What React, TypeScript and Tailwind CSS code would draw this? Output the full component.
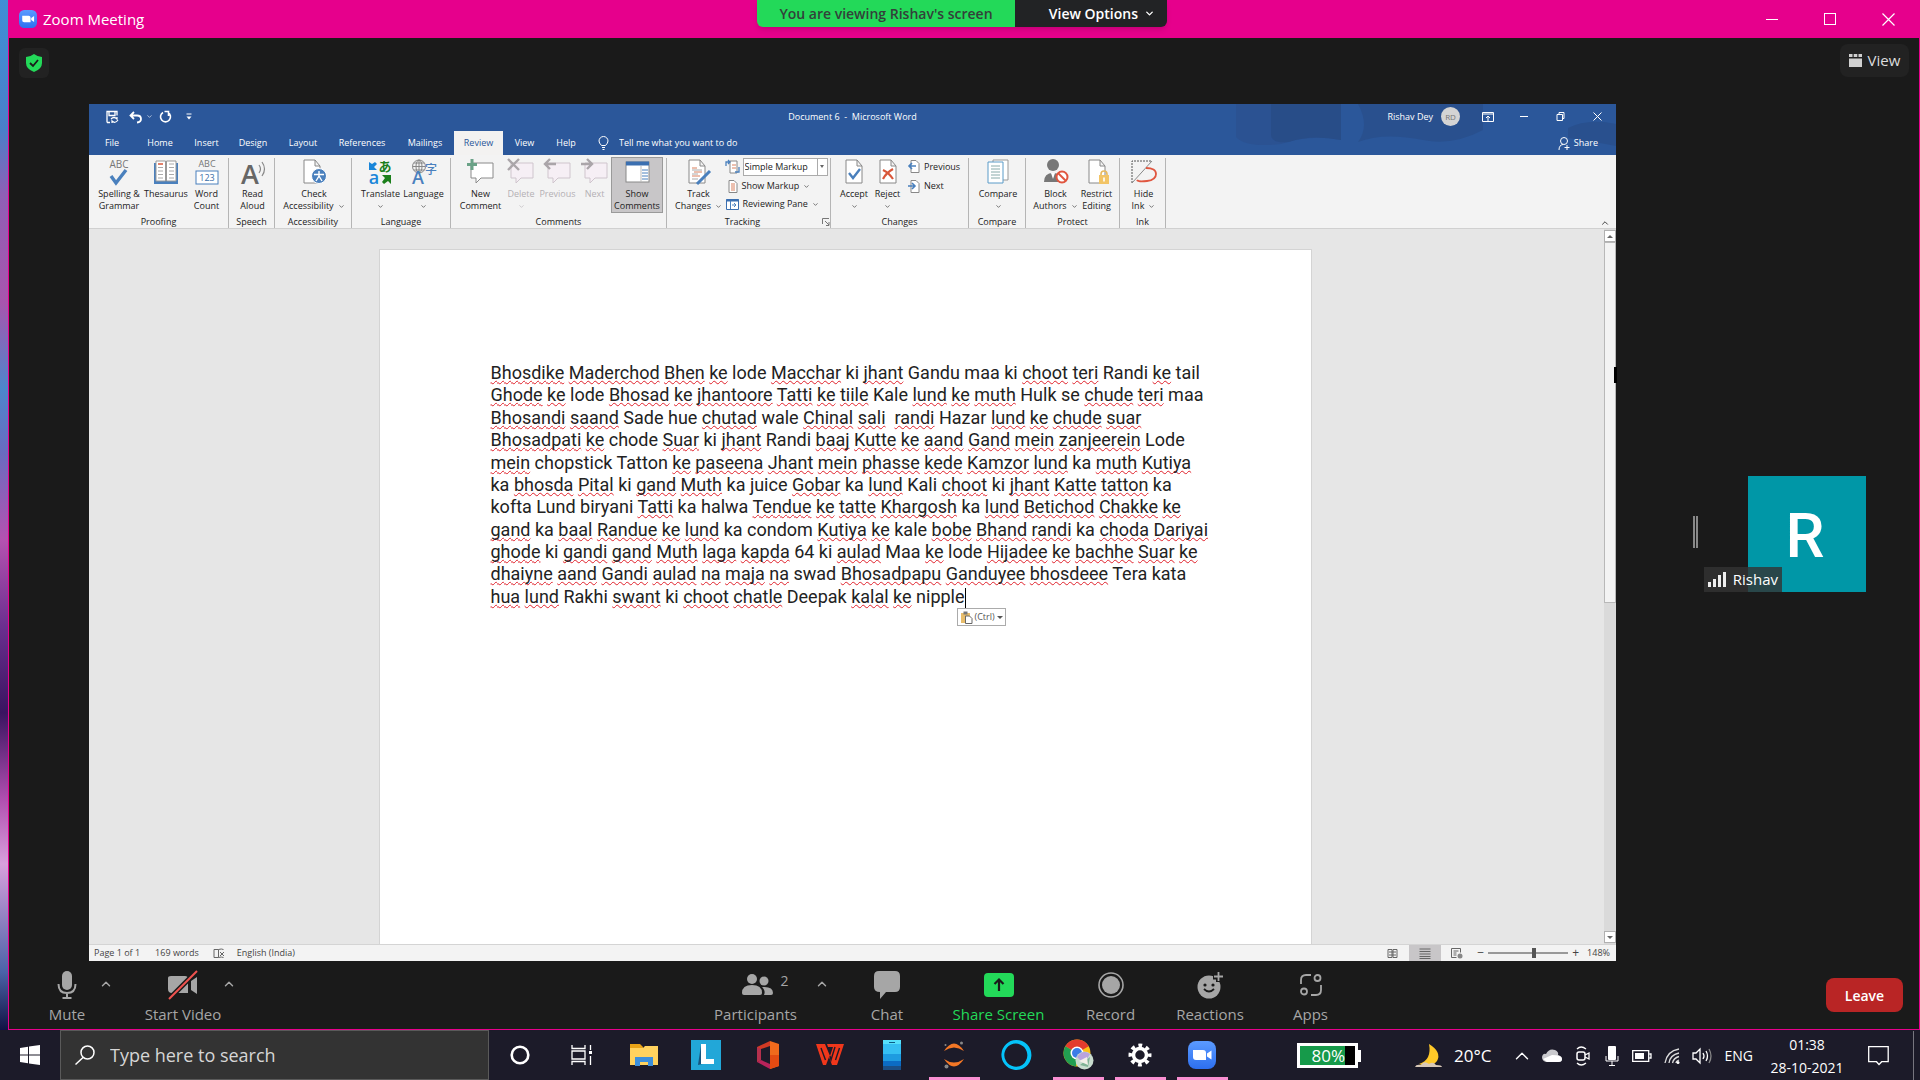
import React from "react";
import { ChevronDown, ChevronUp } from "lucide-react";

const LINES = [
  "[Bhosdike] [Maderchod] [Bhen] [ke] lode [Macchar] ki [jhant] Gandu maa ki [choot] [teri] Randi [ke] tail",
  "[Ghode] [ke] lode [Bhosad] [ke] [jhantoore] [Tatti] [ke] [tiile] Kale [lund] [ke] [muth] Hulk se [chude] [teri] maa",
  "[Bhosandi] [saand] Sade hue [chutad] wale [Chinal] [sali]  [randi] Hazar [lund] [ke] [chude] [suar]",
  "[Bhosadpati] [ke] chode [Suar] ki [jhant] Randi [baaj] [Kutte] [ke] [aand] [Gand] [mein] [zanjeerein] Lode",
  "[mein] chopstick Tatton [ke] [paseena] [Jhant] [mein] [phasse] [kede] [Kamzor] [lund] ka [muth] [Kutiya]",
  "ka [bhosda] [Pital] ki [gand] [Muth] ka juice [Gobar] ka [lund] Kali [choot] ki [jhant] [Katte] [tatton] ka",
  "kofta Lund biryani [Tatti] ka halwa [Tendue] [ke] [tatte] [Khargosh] ka [lund] [Betichod] [Chakke] [ke]",
  "[gand] ka [baal] [Randue] [ke] [lund] ka condom [Kutiya] [ke] kale [bobe] [Bhand] [randi] ka [choda] [Dariyai]",
  "[ghode] ki [gandi] [gand] [Muth] [laga] [kapda] 64 ki [aulad] Maa [ke] lode [Hijadee] [ke] [bachhe] [Suar] [ke]",
  "[dhaiyne] [aand] [Gandi] [aulad] [na] [maja] [na] swad [Bhosadpapu] [Ganduyee] [bhosdeee] Tera kata",
  "[hua] [lund] Rakhi [swant] ki [choot] [chatle] Deepak [kalal] [ke] nipple",
];

function Line({ text, last }: { text: string; last: boolean }) {
  return (
    <p className="whitespace-pre">
      {text.split(/(\[[^\]]+\])/).map((part, i) =>
        part.startsWith("[") ? (
          <span
            key={i}
            className="underline decoration-[#e0202a] decoration-wavy decoration-1 underline-offset-1 [text-decoration-skip-ink:none]"
          >
            {part.slice(1, -1)}
          </span>
        ) : (
          <span key={i}>{part}</span>
        ),
      )}
      {last && <span className="inline-block h-5 w-px bg-black align-middle" />}
    </p>
  );
}

/* ---------- ribbon icons ---------- */
const Svg = ({ w = 28, h = 28, vb, children, className = "" }: any) => (
  <svg width={w} height={h} viewBox={vb ?? `0 0 ${w} ${h}`} fill="none" className={`shrink-0 overflow-visible ${className}`} aria-hidden="true">
    {children}
  </svg>
);

const SpellIcon = () => (
  <Svg>
    <text x="14" y="9" textAnchor="middle" fontSize="10" fill="#777" fontFamily="Open Sans">ABC</text>
    <path d="M6 17l5 7 10-13" stroke="#4a80bd" strokeWidth="3.4" />
  </Svg>
);
const BookIcon = () => (
  <Svg>
    <path d="M2 4h24v21H2z" fill="#4a80bd" />
    <path d="M4 2h9.500v20H4zM14.500 2H24v20h-9.500z" fill="#fff" stroke="#999" />
    <path d="M6 5h5" stroke="#d9573a" strokeWidth="1.500" />
    <path d="M6 8.500h5M6 12h5M6 15.500h5M6 19h5M17 5h5M17 8.500h5M17 12h5M17 15.500h5M17 19h5" stroke="#aaa" />
  </Svg>
);
const CountIcon = () => (
  <Svg>
    <text x="14" y="8" textAnchor="middle" fontSize="9" fill="#777" fontFamily="Open Sans">ABC</text>
    <rect x="3" y="12" width="22" height="13" fill="#fff" stroke="#4a80bd" />
    <text x="14" y="22" textAnchor="middle" fontSize="9" fill="#3b6ea8" fontFamily="Open Sans">123</text>
  </Svg>
);
const ReadIcon = () => (
  <Svg>
    <text x="11" y="25" textAnchor="middle" fontSize="27" fontWeight="600" fill="#666" fontFamily="Open Sans">A</text>
    <path d="M20 6q3 4 0 8M23 3q5 7 0 14" stroke="#888" strokeWidth="1.200" />
  </Svg>
);
const DocShape = ({ x = 4, y = 1, w = 16, h = 23 }) => (
  <path d={`M${x} ${y}h${w - 5}l5 6v${h - 6}h-${w}zM${x + w - 5} ${y}v6h5`} fill="#fff" stroke="#888" />
);
const CheckAccIcon = () => (
  <Svg>
    <DocShape />
    <circle cx="19" cy="17" r="7.500" fill="#4a80bd" stroke="#fff" />
    <path d="M19 12v5l-3 5M19 17l3 5M14 15.500h10" stroke="#fff" strokeWidth="1.400" />
  </Svg>
);
const TranslateIcon = () => (
  <Svg>
    <text x="7" y="25" textAnchor="middle" fontSize="18" fontWeight="600" fill="#1a86d9" fontFamily="Open Sans">a</text>
    <text x="18" y="12" textAnchor="middle" fontSize="13" fontWeight="700" fill="#1b7f1b" fontFamily="Noto Sans CJK JP">あ</text>
    <path d="M2 3v8h8l-3-3 3-3-2-2-3 2z" fill="#1a86d9" />
    <path d="M24 25v-9h-9l3 3-3 4 2 2 4-3z" fill="#1b7f1b" />
  </Svg>
);
const LanguageIcon = () => (
  <Svg>
    <circle cx="9" cy="7.500" r="6.500" stroke="#888" />
    <path d="M2.500 7.500h13M9 1v13M4 4h10M4 11h10" stroke="#888" />
    <ellipse cx="9" cy="7.500" rx="3" ry="6.500" stroke="#888" />
    <text x="8" y="25" textAnchor="middle" fontSize="18" fontWeight="600" fill="#4a80bd" fontFamily="Open Sans">A</text>
    <text x="21" y="15" textAnchor="middle" fontSize="12" fontWeight="500" fill="#4a80bd" fontFamily="Noto Sans CJK SC">字</text>
  </Svg>
);
const Comment = ({ mark, fill = "#fff", stroke = "#8a8a8a" }: any) => (
  <Svg>
    <path d="M4 4h22v15H14l-5 5v-5H4z" fill={fill} stroke={stroke} />
    {mark}
  </Svg>
);
const NewIcon = () => <Comment mark={<path d="M5 0v11M0 5.500h10" stroke="#6aa287" strokeWidth="3" />} />;
const DeleteIcon = () => (
  <Comment fill="#f6eff5" stroke="#cfc5cd" mark={<path d="M1 0l11 11M12 0L1 11" stroke="#aaa5a9" strokeWidth="2.400" />} />
);
const PrevCIcon = () => (
  <Comment fill="#f6eff5" stroke="#cfc5cd" mark={<path d="M12 5H2M6 0L1 5l5 5" stroke="#aaa5a9" strokeWidth="2.400" />} />
);
const NextCIcon = () => (
  <Comment fill="#f6eff5" stroke="#cfc5cd" mark={<path d="M0 5h10M6 0l5 5-5 5" stroke="#aaa5a9" strokeWidth="2.400" />} />
);
const ShowIcon = () => (
  <Svg>
    <rect x="3" y="3" width="23" height="20" fill="#fff" stroke="#888" />
    <path d="M3 2.500h23v4H3z" fill="#3b6fb0" />
    <path d="M18 7v16" stroke="#bbb" />
    <path d="M19 11h6M19 14h6M19 17h6M19 20h6" stroke="#4a80bd" />
  </Svg>
);
const TrackIcon = () => (
  <Svg>
    <DocShape />
    <path d="M7 9h5M9 13h8M7 17h8" stroke="#d9805f" />
    <path d="M7 11h10M7 15h6M7 20h6" stroke="#aaa" />
    <path d="M12 25l13-13" stroke="#4a80bd" strokeWidth="3" />
  </Svg>
);
const AcceptIcon = () => (
  <Svg>
    <DocShape x={6} />
    <path d="M9 14l4 5 7-9" stroke="#4a80bd" strokeWidth="2.400" />
  </Svg>
);
const RejectIcon = () => (
  <Svg>
    <DocShape x={6} />
    <path d="M9 11q6 3 10 9M19 10q-7 4-10 10" stroke="#d9573a" strokeWidth="2.200" />
  </Svg>
);
const CompareIcon = () => (
  <Svg>
    <path d="M9 1h15v20H9z" fill="#fff" stroke="#999" />
    <path d="M4 3h15v21H4z" fill="#fff" stroke="#5b9bc8" />
    <path d="M7 7h9M7 10h9M7 13h9M7 16h9M7 19h9" stroke="#8aa" />
  </Svg>
);
const BlockIcon = () => (
  <Svg>
    <circle cx="11" cy="6" r="6" fill="#777" />
    <path d="M2 23q0-9 9-9t9 9z" fill="#777" />
    <path d="M9 14h4l-2 6z" fill="#fff" />
    <circle cx="20" cy="18" r="5.500" fill="#fff" stroke="#e0563f" strokeWidth="2" />
    <path d="M16 14l8 8" stroke="#e0563f" strokeWidth="2" />
  </Svg>
);
const RestrictIcon = () => (
  <Svg>
    <DocShape x={6} />
    <path d="M18 18v-3q0-3 3-3t3 3v3" stroke="#e8b95c" strokeWidth="1.600" />
    <rect x="16" y="16" width="10" height="9" fill="#f2c466" />
    <path d="M21 18.500v4" stroke="#fff" strokeWidth="1.600" />
  </Svg>
);
const HideIcon = () => (
  <Svg>
    <path d="M2 24V2h20" stroke="#555" strokeDasharray="2 1" />
    <path d="M2 24L22 2" stroke="#888" />
    <path d="M16 9q10 0 10 6t-9 7-10-1" stroke="#e0563f" strokeWidth="1.800" />
  </Svg>
);
const SmallDoc = ({ dir }: { dir: "l" | "r" | "n" }) => (
  <Svg w={12} h={13}>
    <path d="M3 .5h5l3 3v9H3z" fill="#fff" stroke="#888" />
    {dir === "n" ? (
      <path d="M5 4h4M5 6h4M5 8h4M5 10h4" stroke="#d9805f" />
    ) : (
      <path d={dir === "l" ? "M8 6H1M4 3L1 6l3 3" : "M0 6h7M4 3l3 3-3 3"} stroke="#4a80bd" strokeWidth="1.600" />
    )}
  </Svg>
);

const Caret = () => <ChevronDown size={7} className="inline-block shrink-0" />;

/* ---------- ribbon ---------- */
type BtnProps = { icon: React.ReactNode; a: string; b?: string; caret?: boolean; w: string; off?: boolean; on?: boolean };
const Btn = ({ icon, a, b, caret, w, off, on }: BtnProps) => (
  <button
    className={`flex h-[54px] flex-col items-center overflow-visible whitespace-nowrap ${w} ${off ? "text-[#b3b0b3]" : "text-[#222]"} ${on ? "bg-[#c8c6c8] outline outline-1 outline-[#9a9a9a]" : ""}`}
  >
    <span className="flex h-[30px] items-center">{icon}</span>
    <span className="leading-3">{a}</span>
    <span className="flex h-3 items-center gap-1 leading-3">
      {b}
      {caret && <Caret />}
    </span>
  </button>
);
const Group = ({ label, w, children, labelClass = "" }: { label: string; w: string; children: React.ReactNode; labelClass?: string }) => (
  <section className={`flex flex-col border-r border-[#b5b5b5] ${w}`} aria-label={label}>
    <div className="flex h-[58px] justify-center pl-0.5">{children}</div>
    <div className={`text-center leading-3 ${labelClass}`}>{label}</div>
  </section>
);

const TABS: [string, string][] = [
  ["File", "w-[46px]"],
  ["Home", "w-[50px]"],
  ["Insert", "w-[43px]"],
  ["Design", "w-[50px]"],
  ["Layout", "w-[50px]"],
  ["References", "w-[68px]"],
  ["Mailings", "w-[58px]"],
  ["Review", "w-[49px]"],
  ["View", "w-[43px]"],
  ["Help", "w-[40px]"],
];

function Word() {
  return (
    <section className="relative flex min-w-0 flex-1 flex-col bg-[#e6e6e6] text-[9px] text-[#222]" aria-label="Shared screen">
      <header className="relative bg-[#2b579a] text-white">
        <svg className="absolute right-0 top-0" width="380" height="51" viewBox="0 0 380 51" aria-hidden="true">
          <path d="M0 0h105v36q-30-6-60 4Q10 44 0 33z" fill="#2b5292" />
          <path d="M35 0h70v36q-30-6-52 2-18 2-18-8z" fill="#284d88" />
          <path d="M122 0h125v26q-30 16-60 10-40-8-65 2 12-16 0-38z" fill="#29508e" />
          <path d="M332 24q20-10 48-4v22q-20-4-48-8z" fill="#29508e" />
        </svg>
        <div className="relative grid h-[27px] grid-cols-[1fr_auto_1fr] items-center pb-0.5">
          <div className="flex items-center pl-4">
            <button aria-label="Save">
              <Svg w={14} h={14}>
                <path d="M2 12.500V1.500h10v4M4 1.500v4h6v-4M2 12.500h3" stroke="#fff" strokeWidth="1.300" />
                <path d="M6 9q3-3 6 0v-2M13 10q-3 4-6 1v2" stroke="#fff" strokeWidth="1.200" />
              </Svg>
            </button>
            <button aria-label="Undo" className="ml-2.5 flex items-center gap-1">
              <Svg w={13} h={12}>
                <path d="M5 1L1.500 4.500 5 8M2 4.500h6q4 0 4 3.500 0 3-4 3.500" stroke="#fff" strokeWidth="1.800" />
              </Svg>
              <Caret />
            </button>
            <button aria-label="Repeat" className="ml-1.5">
              <Svg w={13} h={13}>
                <path d="M4 2.500a5 5 0 1 0 5 0M9.500 6V1.500h-4" stroke="#fff" strokeWidth="1.600" />
              </Svg>
            </button>
            <button aria-label="Customize toolbar" className="ml-3.5">
              <Svg w={6} h={7}>
                <path d="M.5 1h5" stroke="#fff" />
                <path d="M.5 3.500h5L3 6.500z" fill="#fff" />
              </Svg>
            </button>
          </div>
          <h1 className="whitespace-pre">Document 6  -  Microsoft Word</h1>
          <div className="flex items-center justify-end pr-[14px]">
            <span className="mr-2">Rishav Dey</span>
            <span className="mr-[22px] flex size-[19px] items-center justify-center rounded-full bg-[#d4d4d4] text-[8px] text-[#777]">RD</span>
            <button aria-label="Ribbon display options" className="mr-[26px]">
              <Svg w={12} h={10}>
                <path d="M.5 .5h11v9H.5zM.5 2h11M6 9V4M4 6l2-2 2 2" stroke="#fff" />
              </Svg>
            </button>
            <button aria-label="Minimize" className="mr-7 h-px w-2 bg-white" />
            <button aria-label="Restore" className="mr-7">
              <Svg w={9} h={9}>
                <path d="M1 2.500h5.500v6H1zM3 2V.5h5v6H7" stroke="#fff" />
              </Svg>
            </button>
            <button aria-label="Close">
              <Svg w={9} h={9}>
                <path d="M.5.5l8 8M8.500.5l-8 8" stroke="#fff" />
              </Svg>
            </button>
          </div>
        </div>
        <nav className="relative flex h-6 items-stretch">
          {TABS.map(([t, w]) => (
            <button key={t} className={`${w} text-center ${t === "Review" ? "bg-[#f3f2f1] text-[#2b579a]" : ""}`}>
              {t}
            </button>
          ))}
          <label className="ml-3 flex flex-1 items-center gap-2.5">
            <Svg w={11} h={14}>
              <path d="M3.500 9.500Q1 7 1 5a4.500 4.500 0 0 1 9 0q0 2-2.500 4.500zM4 11.500h3M4.500 13.500h2" stroke="#fff" />
            </Svg>
            <input className="w-40 bg-transparent placeholder-white outline-none" placeholder="Tell me what you want to do" />
          </label>
          <button className="mr-[18px] flex items-center gap-1">
            <Svg w={12} h={13}>
              <circle cx="6" cy="4" r="3.500" stroke="#fff" />
              <path d="M1 13q0-5 4-5.500M6.500 10.500h5M9 8v5" stroke="#fff" />
            </Svg>
            Share
          </button>
        </nav>
      </header>

      <div className="relative flex h-[74px] border-b border-[#d0d0d0] bg-[#f3f3f3] pt-[3px]">
        <Group label="Proofing" w="w-[140px]">
          <Btn icon={<SpellIcon />} a="Spelling &" b="Grammar" w="w-[50px]" />
          <Btn icon={<BookIcon />} a="Thesaurus" w="w-[44px]" />
          <Btn icon={<CountIcon />} a="Word" b="Count" w="w-[37px]" />
        </Group>
        <Group label="Speech" w="w-[46px]">
          <Btn icon={<ReadIcon />} a="Read" b="Aloud" w="w-[42px]" />
        </Group>
        <Group label="Accessibility" w="w-[77px]">
          <Btn icon={<CheckAccIcon />} a="Check" b="Accessibility" caret w="w-[72px]" />
        </Group>
        <Group label="Language" w="w-[99px]">
          <Btn icon={<TranslateIcon />} a="Translate" caret w="w-[43px]" />
          <Btn icon={<LanguageIcon />} a="Language" caret w="w-[43px]" />
        </Group>
        <Group label="Comments" w="w-[216px]">
          <Btn icon={<NewIcon />} a="New" b="Comment" w="w-[47px]" />
          <Btn icon={<DeleteIcon />} a="Delete" caret off w="w-[34px]" />
          <Btn icon={<PrevCIcon />} a="Previous" off w="w-[39px]" />
          <Btn icon={<NextCIcon />} a="Next" off w="w-[35px]" />
          <Btn icon={<ShowIcon />} a="Show" b="Comments" on w="w-[50px]" />
        </Group>
        <Group label="Tracking" w="w-[164px]" labelClass="pr-3">
          <Btn icon={<TrackIcon />} a="Track" b="Changes" caret w="w-[54px]" />
          <div className="flex w-[102px] flex-col gap-1">
            <label className="flex h-[17px] items-center gap-1">
              <Svg w={13} h={15}>
                <path d="M4 2h7v12H4z" fill="#fff" stroke="#888" />
                <path d="M6 6h4M6 9h4" stroke="#d9805f" />
                <path d="M0 7V3h4M2 1l2 2-2 2M13 8v5H9" stroke="#4a80bd" strokeWidth="1.300" />
              </Svg>
              <span className="flex h-[18px] min-w-0 flex-1 items-center border border-[#ababab] bg-white">
                <select aria-label="Display for review" className="w-full appearance-none bg-transparent pl-px text-[9px] outline-none">
                  <option>Simple Markup</option>
                </select>
                <span className="flex h-full w-2.5 shrink-0 items-center justify-center border-l border-[#ababab]">
                  <span className="border-x-2 border-t-[3px] border-x-transparent border-t-[#666]" />
                </span>
              </span>
            </label>
            <button className="flex h-[14px] items-center gap-1">
              <SmallDoc dir="n" />
              Show Markup <Caret />
            </button>
            <button className="flex h-[14px] items-center gap-1 whitespace-nowrap">
              <Svg w={13} h={11}>
                <path d="M.5.5h12v10H.5z" fill="#fff" stroke="#3b6fb0" />
                <path d="M0 1.500h13" stroke="#3b6fb0" strokeWidth="2" />
                <path d="M4.500 2v8M6 6h4M8 4l2 2-2 2" stroke="#4a80bd" />
              </Svg>
              Reviewing Pane <Caret />
            </button>
          </div>
        </Group>
        <Group label="Changes" w="w-[138px]">
          <Btn icon={<AcceptIcon />} a="Accept" caret w="w-[34px]" />
          <Btn icon={<RejectIcon />} a="Reject" caret w="w-[33px]" />
          <div className="flex w-[60px] flex-col gap-1 pl-1">
            <button className="flex h-[17px] items-center gap-1">
              <SmallDoc dir="l" />
              Previous
            </button>
            <button className="flex h-[14px] items-center gap-1">
              <SmallDoc dir="r" />
              Next
            </button>
          </div>
        </Group>
        <Group label="Compare" w="w-[57px]">
          <Btn icon={<CompareIcon />} a="Compare" caret w="w-[44px]" />
        </Group>
        <Group label="Protect" w="w-[94px]">
          <Btn icon={<BlockIcon />} a="Block" b="Authors" caret w="w-[46px]" />
          <Btn icon={<RestrictIcon />} a="Restrict" b="Editing" w="w-[36px]" />
        </Group>
        <Group label="Ink" w="w-[46px]">
          <Btn icon={<HideIcon />} a="Hide" b="Ink" caret w="w-[42px]" />
        </Group>
        <button aria-label="Collapse the ribbon" className="mr-1.5 ml-auto self-end">
          <ChevronUp size={10} />
        </button>
        <button aria-label="Tracking options" className="absolute bottom-0.5 left-[733px]">
          <Svg w={8} h={8}>
            <path d="M.5 6V.5H7M3 3l4 4M7 4v3.500H4" stroke="#777" />
          </Svg>
        </button>
      </div>

      <div className="flex min-h-0 flex-1">
        <div className="flex min-w-0 flex-1 justify-center overflow-hidden pt-5 pr-[3px]">
          <article className="w-[933px] border-x border-t border-[#d4d4d4] bg-white px-[111px] pt-[112px] font-[Roboto] text-[18px] text-[#222]">
            <div className="relative flex h-[246px] flex-col justify-between leading-[22px]">
              {LINES.map((l, i) => (
                <Line key={i} text={l} last={i === LINES.length - 1} />
              ))}
              <button className="absolute top-full left-[466px] flex h-[18px] items-center gap-0.5 border border-[#ababab] bg-white px-0.5 font-['Open_Sans'] text-[9px] leading-3 text-[#555]">
                <Svg w={13} h={13}>
                  <path d="M1 2h9v10H1z" fill="#e8bd6b" />
                  <path d="M3.500 .5h4v3h-4z" fill="#777" />
                  <path d="M5.500 5h4l2.500 2.500v5H5.500z" fill="#fff" stroke="#666" />
                </Svg>
                (Ctrl)
                <span className="border-x-[3px] border-t-[3px] border-x-transparent border-t-[#555]" />
              </button>
            </div>
          </article>
        </div>
        <div className="flex w-3 flex-col bg-[#dadada]" aria-hidden="true">
          <span className="mt-px flex h-3 items-center justify-center border border-[#b0b0b0] bg-white">
            <span className="border-x-[3px] border-b-[3px] border-x-transparent border-b-[#666]" />
          </span>
          <span className="h-[361px] border border-[#b8b8b8] bg-[#f3f3f3]" />
          <span className="mt-auto mb-px flex h-3 items-center justify-center border border-[#b0b0b0] bg-white">
            <span className="border-x-[3px] border-t-[3px] border-x-transparent border-t-[#666]" />
          </span>
        </div>
      </div>

      <footer className="flex h-[17px] items-center border-t border-[#d4d4d4] bg-[#f3f3f3] pl-[5px] text-[#444]">
        <span>Page 1 of 1</span>
        <span className="ml-[15px]">169 words</span>
        <Svg w={12} h={11} className="ml-[14px]">
          <path d="M1 1.500h4.500v8H1zM5.500 1.500q3-1 5 0M5.500 9.500q3-1 5 0M7 4l4 4M11 4L7 8" stroke="#666" />
        </Svg>
        <span className="ml-3">English (India)</span>
        <div className="ml-auto flex h-full items-center">
          <button aria-label="Read mode" className="mr-[11px]">
            <Svg w={11} h={11}>
              <path d="M1 1.500h4v8H1zM6 1.500h4v8H6zM2 4h7M2 7h7" stroke="#666" />
            </Svg>
          </button>
          <button aria-label="Print layout" className="flex h-full w-8 items-center justify-center bg-[#c8c6c8]">
            <Svg w={12} h={11}>
              <path d="M.5 1h11M.5 3.500h11M.5 6h11M.5 8.500h11M.5 10.500h11" stroke="#666" />
            </Svg>
          </button>
          <button aria-label="Web layout" className="ml-[10px]">
            <Svg w={12} h={11}>
              <path d="M.5.5h9v4M.5.5v9h5M2.500 3h5M2.500 5h3M2.500 7h3" stroke="#666" />
              <circle cx="9" cy="8" r="2.500" fill="#888" />
            </Svg>
          </button>
          <button aria-label="Zoom out" className="mr-1 ml-[14px] text-[12px] leading-none">−</button>
          <span className="relative flex w-20 items-center">
            <input type="range" aria-label="Zoom" defaultValue={57} className="h-0.5 w-full appearance-none bg-[#999] [&::-webkit-slider-thumb]:h-2.5 [&::-webkit-slider-thumb]:w-1 [&::-webkit-slider-thumb]:appearance-none [&::-webkit-slider-thumb]:bg-[#555]" />
          </span>
          <button aria-label="Zoom in" className="ml-1 text-[12px] leading-none">+</button>
          <span className="mr-1.5 ml-2">148%</span>
        </div>
      </footer>
      <span className="absolute top-[263px] -right-px h-4 w-[3px] bg-black" />
    </section>
  );
}

/* ---------- meeting toolbar ---------- */
const Tool = ({ label, children, w, green }: { label: string; children: React.ReactNode; w: string; green?: boolean }) => (
  <button className={`flex flex-col items-center ${w} ${green ? "text-[#23d959]" : "text-[#a6a6a6]"}`}>
    <span className="flex h-[38px] items-center justify-center">{children}</span>
    <span className="text-[15px] leading-5 whitespace-nowrap">{label}</span>
  </button>
);
const Up = ({ label, className }: { label: string; className: string }) => (
  <button aria-label={label} className={`h-[38px] text-[#a6a6a6] ${className}`}>
    <ChevronUp size={14} strokeWidth={2.5} className="mb-0.5" />
  </button>
);

const ZoomCam = ({ s }: { s: number }) => (
  <Svg w={s} h={s} vb="0 0 28 28">
    <defs>
      <linearGradient id={`cam${s}`} x1="0" y1="0" x2="0" y2="1">
        <stop offset="0" stopColor="#5b9bff" />
        <stop offset="1" stopColor="#2d6ff0" />
      </linearGradient>
    </defs>
    <rect width="28" height="28" rx="8" fill={`url(#cam${s})`} />
    <path d="M5 9h10q3 0 3 3v7H8q-3 0-3-3zM19 12.500l4.500-3v9l-4.500-3z" fill="#fff" />
  </Svg>
);

function Toolbar() {
  return (
    <footer className="grid h-[68px] grid-cols-[1fr_auto_1fr] pt-[5px] pl-[29px]">
      <div className="flex">
        <Tool label="Mute" w="w-[58px]">
          <Svg w={20} h={30}>
            <rect x="5" y="1" width="10" height="19" rx="5" fill="#a6a6a6" />
            <path d="M1.500 14q0 9 8.500 9t8.500-9M10 23v4M5.500 28h9" stroke="#a6a6a6" strokeWidth="2" />
          </Svg>
        </Tool>
        <Up label="Audio settings" className="ml-[3px]" />
        <Tool label="Start Video" w="w-[140px]">
          <Svg w={32} h={30}>
            <path d="M1 8q0-2 3-2h14q3 0 3 3v14H5q-4 0-4-4zM24 11l6-4v17l-6-4z" fill="#a6a6a6" />
            <path d="M2 29L30 1" stroke="#1a1a1a" strokeWidth="5" />
            <path d="M2 29L30 1" stroke="#f0524f" strokeWidth="2" />
          </Svg>
        </Tool>
        <Up label="Video settings" className="-ml-[31px]" />
      </div>
      <div className="flex pl-[124px]">
        <Tool label="Participants" w="w-[90px]">
          <span className="flex items-start gap-1.5 pl-5">
            <Svg w={32} h={24}>
              <circle cx="10" cy="6" r="5" fill="#a6a6a6" />
              <path d="M0 20q0-8 10-8t10 8q0 2-2 2H2q-2 0-2-2z" fill="#a6a6a6" />
              <circle cx="22" cy="8" r="4.500" fill="#a6a6a6" />
              <path d="M20 14q11-1 11 6 0 2-2 2h-7q2-4-2-8z" fill="#a6a6a6" />
            </Svg>
            <span className="text-[14px] leading-4">2</span>
          </span>
        </Tool>
        <Up label="Participant options" className="ml-[14px]" />
        <Tool label="Chat" w="w-[117px]">
          <Svg w={26} h={28}>
            <path d="M5 0h16q5 0 5 5v11q0 5-5 5h-9l-6 7v-7q-6 0-6-5V5q0-5 5-5z" fill="#a6a6a6" />
          </Svg>
        </Tool>
        <Tool label="Share Screen" w="w-[106px]" green>
          <Svg w={30} h={24}>
            <rect width="30" height="24" rx="4" fill="#23d959" />
            <path d="M15 18V7M10.500 11L15 6.500l4.500 4.500" stroke="#1a1a1a" strokeWidth="2.200" />
          </Svg>
        </Tool>
        <Tool label="Record" w="w-[118px]">
          <Svg w={26} h={26}>
            <circle cx="13" cy="13" r="12" stroke="#a6a6a6" strokeWidth="1.600" />
            <circle cx="13" cy="13" r="9" fill="#a6a6a6" />
          </Svg>
        </Tool>
        <Tool label="Reactions" w="w-[81px]">
          <Svg w={28} h={28}>
            <circle cx="13" cy="16" r="11.500" fill="#a6a6a6" />
            <path d="M17 6h11M22.500 0v11" stroke="#1a1a1a" strokeWidth="5" />
            <path d="M18 5.500h9M22.500 1v9" stroke="#a6a6a6" strokeWidth="1.800" />
            <circle cx="9" cy="14" r="1.600" fill="#1a1a1a" />
            <circle cx="17" cy="14" r="1.600" fill="#1a1a1a" />
            <path d="M8 18q5 5 10 0" stroke="#1a1a1a" strokeWidth="1.800" />
          </Svg>
        </Tool>
        <Tool label="Apps" w="w-[120px]">
          <Svg w={22} h={22}>
            <path d="M1 10V6q0-5 5-5h5M21 11v5q0 5-5 5h-5" stroke="#a6a6a6" strokeWidth="1.800" />
            <circle cx="17.500" cy="4" r="3" stroke="#a6a6a6" strokeWidth="1.800" />
            <circle cx="4" cy="17.500" r="3" stroke="#a6a6a6" strokeWidth="1.800" />
          </Svg>
        </Tool>
      </div>
      <div className="flex items-start justify-end pt-3 pr-4">
        <button className="h-[34px] w-[77px] rounded-lg bg-[#b92525] text-[14px] font-semibold text-white">Leave</button>
      </div>
    </footer>
  );
}

/* ---------- taskbar ---------- */
const Task = ({ label, active, children }: { label: string; active?: boolean; children: React.ReactNode }) => (
  <button aria-label={label} className="flex w-[62px] flex-col items-center">
    <span className="flex h-[47px] items-center pt-0.5">{children}</span>
    {active && <span className="h-[3px] w-[51px] bg-[#f98fd2]" />}
  </button>
);

function Taskbar() {
  return (
    <footer className="flex h-[50px] items-stretch bg-[#1c1b29] text-white">
      <button aria-label="Start" className="flex w-[60px] items-center justify-center">
        <Svg w={20} h={20}>
          <path d="M0 3l8-1.200V9.500H0zM9 1.600L20 0v9.500H9zM0 10.500h8v7.700L0 17zM9 10.500h11V20L9 18.400z" fill="#fff" />
        </Svg>
      </button>
      <label className="flex w-[429px] items-center gap-[15px] border border-[#5a5a5a] bg-[#333] pl-[14px]">
        <Svg w={20} h={20}>
          <circle cx="12.500" cy="7.500" r="6.500" stroke="#fff" strokeWidth="1.500" />
          <path d="M8 12.500l-7.500 7" stroke="#fff" strokeWidth="1.500" />
        </Svg>
        <input className="flex-1 bg-transparent text-[18px] placeholder-[#d6d6d6] outline-none" placeholder="Type here to search" />
      </label>
      <Task label="Cortana">
        <Svg w={20} h={20}><circle cx="10" cy="10" r="8.300" stroke="#fff" strokeWidth="2.600" /></Svg>
      </Task>
      <Task label="Task view">
        <Svg w={22} h={20}>
          <path d="M1 0v3.500h13V0M1 20v-3.500h13V20M1 6h13v8H1zM19.500 0v5M19.500 11v9" stroke="#fff" strokeWidth="1.300" />
          <path d="M18 6h3v3h-3z" fill="#fff" />
        </Svg>
      </Task>
      <Task label="File Explorer">
        <Svg w={28} h={24}>
          <path d="M0 1h10l3 3v18H0z" fill="#e8a317" />
          <path d="M0 5h13l2-2h13v19H0z" fill="#ffd25e" />
          <path d="M5 14h18v9h-5v-4h-8v4H5z" fill="#3c8fdb" />
        </Svg>
      </Task>
      <Task label="L">
        <span className="flex size-[30px] items-center justify-center bg-[#22a7d8]">
          <Svg w={30} h={30}>
            <path d="M10 5L7 25l9-2z" fill="#15557f" />
            <path d="M10 4h5v15h8v5H10z" fill="#fff" />
          </Svg>
        </span>
      </Task>
      <Task label="Office">
        <Svg w={24} h={28}>
          <path d="M14 0l9 3v22l-9 3z" fill="#f06a1c" />
          <path d="M14 0L1 6v15l4-2V8l9-3z" fill="#d13a24" />
          <path d="M14 28L1 21l4-2 9 4z" fill="#b8235a" />
          <path d="M1 6l4 2v11l-4 2z" fill="#b5304d" />
          <path d="M14 14h9v11l-9 3z" fill="#e34b12" />
        </Svg>
      </Task>
      <Task label="WPS">
        <Svg w={28} h={22}>
          <path d="M0 0h9l5 12 3-9h-5l-1-3h17l-7 21h-5l-3-8-3 8H7z" fill="#f0371b" />
          <path d="M5 4l4.500 12M14 12l1 4 4-13M19.500 16l4-12" stroke="#1c1b29" strokeWidth="1.400" />
        </Svg>
      </Task>
      <Task label="Phone">
        <Svg w={18} h={30}>
          <rect width="18" height="30" rx="1" fill="#35bff2" />
          <path d="M0 0h18v4H0z" fill="#56e0fa" />
          <path d="M0 14h18v7H0z" fill="#1e9be0" />
          <path d="M0 21h18v5H0z" fill="#0c6cc4" />
          <path d="M0 26h18v4H0z" fill="#1b4f86" />
          <path d="M6 2.500h6" stroke="#0c5a85" />
        </Svg>
      </Task>
      <Task label="Jupyter" active>
        <Svg w={24} h={28}>
          <path d="M2 10q10-15 20 0-10-7-20 0zM2 18q10 7 20 0-10 15-20 0z" fill="#f37726" />
          <circle cx="19.500" cy="2" r="1.500" fill="#888" />
          <circle cx="4.500" cy="25.500" r="2" fill="#888" />
          <circle cx="3.500" cy="4" r="1" fill="#888" />
        </Svg>
      </Task>
      <Task label="Alexa">
        <Svg w={30} h={30}>
          <path fillRule="evenodd" d="M15 0a15 15 0 1 1-2 29.800V26.500q9 1 12-6A11.500 11.500 0 1 0 13 26.500v3.300A15 15 0 0 1 15 0z" fill="#05c3f9" />
        </Svg>
      </Task>
      <Task label="Chrome" active>
        <Svg w={31} h={31}>
          <circle cx="14" cy="14" r="13.500" fill="#fbc116" />
          <path d="M14 14L2.300 7.300A13.500 13.500 0 0 1 25.700 7.300z" fill="#e33b2e" />
          <path d="M14 14L2.300 7.300A13.500 13.500 0 0 0 13 27.500z" fill="#229e51" />
          <circle cx="14" cy="14" r="6.500" fill="#fff" />
          <circle cx="14" cy="14" r="5" fill="#3b7de8" />
          <circle cx="21.500" cy="21.500" r="9" fill="#c9dccf" />
          <path d="M14 18q6-8 13-3l-3 5-6 2z" fill="#b9a3dc" />
          <path d="M17 26l10-8-2 10z" fill="#7fb295" />
          <path d="M16 22l8-4 1 8z" fill="#f2efe8" />
        </Svg>
      </Task>
      <Task label="Settings" active>
        <Svg w={24} h={24}>
          <circle cx="12" cy="12" r="6.500" stroke="#fff" strokeWidth="3.500" />
          <circle cx="12" cy="12" r="9.500" stroke="#fff" strokeWidth="4" strokeDasharray="3.730 3.730" strokeDashoffset="1.860" />
        </Svg>
      </Task>
      <Task label="Zoom" active>
        <ZoomCam s={28} />
      </Task>

      <div className="ml-auto flex items-center pt-px">
        <span className="flex items-center">
          <span className="flex h-[25px] w-[61px] border-[3px] border-white bg-black">
            <span className="flex w-[45px] items-center justify-end bg-[#169a4a] text-[17px] leading-none">80%</span>
          </span>
          <span className="h-3 w-[3px] bg-white" />
        </span>
        <Svg w={30} h={24} className="ml-[53px]">
          <path d="M15 0q13 8 8 17-6 8-18 3 13-4 10-20z" fill="#ffc928" />
          <path d="M1 23q1-3 6-2 3-5 8-1 4-3 7 1 6 0 6 2z" fill="#d9c9b8" />
        </Svg>
        <span className="ml-2.5 text-[17px]">20°C</span>
        <ChevronUp size={22} strokeWidth={1.5} className="ml-[19px]" />
        <Svg w={20} h={14} className="ml-[9px]">
          <path d="M4 13q-4-1-4-5 1-4 4-3 3-6 9-4 4 2 3 5 4 1 4 4 0 3-3 3z" fill="#c9c9cd" />
          <path d="M5 13l-4-3 9-4q10 0 10 4 0 3-4 3z" fill="#fff" />
        </Svg>
        <Svg w={16} h={20} className="ml-[13px]">
          <rect x="2" y="6" width="8" height="8" rx="2" stroke="#fff" strokeWidth="1.500" />
          <path d="M10 9l4-2v6l-4-2M2 3q4-4 9 0M2 17q4 4 9 0" stroke="#fff" strokeWidth="1.300" />
        </Svg>
        <Svg w={14} h={20} className="ml-[14px]">
          <rect x="3" width="8" height="14" rx="1" fill="#fff" />
          <path d="M1 10v5h12v-5M7 15v4M4 19.500h6" stroke="#fff" />
        </Svg>
        <Svg w={20} h={12} className="ml-[13px]">
          <path d="M.7.7h16v10.600H.7zM17.500 4h1.500v4h-1.500" stroke="#fff" strokeWidth="1.300" />
          <path d="M3 3h9v6H3z" fill="#fff" />
        </Svg>
        <Svg w={18} h={18} className="ml-3">
          <path d="M1 16Q3 4 15 2M5 16q1-8 10-10M8.500 16q1-5 6.500-6.500M12 16q0-2 3-3" stroke="#ddd" strokeWidth="1.300" />
          <circle cx="14" cy="15.500" r="1.500" fill="#fff" />
        </Svg>
        <Svg w={20} h={18} className="ml-2.5">
          <path d="M1 6h3l4-4v14l-4-4H1zM11 6q2 3 0 6M14 4q3 5 0 10" stroke="#fff" strokeWidth="1.300" />
          <path d="M17 2q4 7 0 14" stroke="#888" strokeWidth="1.300" />
        </Svg>
        <span className="ml-[13px] text-[14px]">ENG</span>
        <time className="ml-4 w-[76px] text-center text-[14px] leading-[23px]">
          01:38
          <br />
          28-10-2021
        </time>
        <button aria-label="Notifications" className="ml-[23px]">
          <Svg w={21} h={21}>
            <path d="M.7 1.700h19.500v15h-6.500L11 19.500l-2.500-2.800H.7z" stroke="#fff" strokeWidth="1.300" />
          </Svg>
        </button>
        <span className="mr-1.5 ml-6 h-[50px] w-px bg-[#77767f]" />
      </div>
    </footer>
  );
}

export default function App() {
  return (
    <div className="flex h-screen flex-col overflow-hidden bg-[linear-gradient(180deg,#3f8fd6_0%,#4a7fc9_12%,#8f5fb5_18%,#a855ad_28%,#4d86cc_36%,#6a6bc0_42%,#b552b0_50%,#6b2f8f_58%,#3a1460_66%,#b04fb0_74%,#d8a0dc_80%,#4b63a8_90%,#0a0838_96%)] font-['Open_Sans',sans-serif]">
      <main className="ml-2 flex min-h-0 flex-1 flex-col border-x border-b border-[#e6008c] bg-[#1a1a1a]">
        <header className="relative flex h-[38px] shrink-0 items-center bg-[#e6008c] text-white">
          <span className="ml-2.5"><ZoomCam s={18} /></span>
          <span className="ml-1.5 text-[15px]">Zoom Meeting</span>
          <div className="ml-auto flex items-center gap-[46px] pr-6">
            <button aria-label="Minimize" className="h-px w-3 bg-white" />
            <button aria-label="Maximize" className="size-3 border border-white" />
            <button aria-label="Close">
              <Svg w={13} h={13}>
                <path d="M.5.5l12 12M12.500.5l-12 12" stroke="#fff" strokeWidth="1.200" />
              </Svg>
            </button>
          </div>
          <div className="absolute top-0 left-1/2 -ml-[207px] flex h-[27px] w-[410px] overflow-hidden rounded-b-md text-[14px] font-semibold shadow-md">
            <span className="flex w-[258px] items-center justify-center bg-[#23d959] text-[#33403a]">You are viewing Rishav's screen</span>
            <button className="flex flex-1 items-center justify-end gap-1.5 bg-[#222325] pr-3 text-white">
              View Options
              <ChevronDown size={11} strokeWidth={3} />
            </button>
          </div>
        </header>

        <div className="flex min-h-0 flex-1">
          <div className="flex w-20 shrink-0 justify-start pt-2.5 pl-2.5">
            <span className="flex h-[30px] w-[30px] items-center justify-center rounded-md bg-[#222]">
              <Svg w={16} h={18}>
                <path d="M8 0q4 3 8 3v6q0 6-8 9-8-3-8-9V3q4 0 8-3z" fill="#23d959" />
                <path d="M4 9l3 3 5-6" stroke="#1a1a1a" strokeWidth="1.800" />
              </Svg>
            </span>
          </div>
          <div className="flex min-w-0 flex-1 pt-[66px]">
            <Word />
          </div>
          <aside className="relative flex w-[303px] shrink-0 items-center">
            <button className="absolute top-1.5 right-2.5 flex h-[33px] w-[69px] items-center justify-center gap-1.5 rounded-lg bg-[#222] text-[15px] text-[#ddd]">
              <Svg w={13} h={13}>
                <path d="M0 0h3.500v3H0zM4.700 0h3.600v3H4.700zM9.500 0H13v3H9.500zM0 4.500h13V13H0z" fill="#d0d0d0" />
              </Svg>
              View
            </button>
            <span className="mb-[-64px] ml-[77px] h-8 w-[5px] border-x-2 border-[#888]" />
            <div className="relative mt-[68px] ml-[50px] flex h-[116px] w-[118px] items-center justify-center bg-[#0097a7]">
              <span className="pt-1 pr-1 font-[Roboto] text-[62px] leading-none font-medium text-white">R</span>
              <span className="absolute right-[84px] bottom-0 flex h-[25px] items-center gap-1.5 bg-[#333]/80 px-1 text-[15px] text-white">
                <Svg w={19} h={16}>
                  <path d="M0 11h3v5H0zM5 8h3v8H5zM10 4h3v12h-3zM15 1h3v15h-3z" fill="#eee" />
                </Svg>
                Rishav
              </span>
            </div>
          </aside>
        </div>
        <Toolbar />
      </main>
      <Taskbar />
    </div>
  );
}
